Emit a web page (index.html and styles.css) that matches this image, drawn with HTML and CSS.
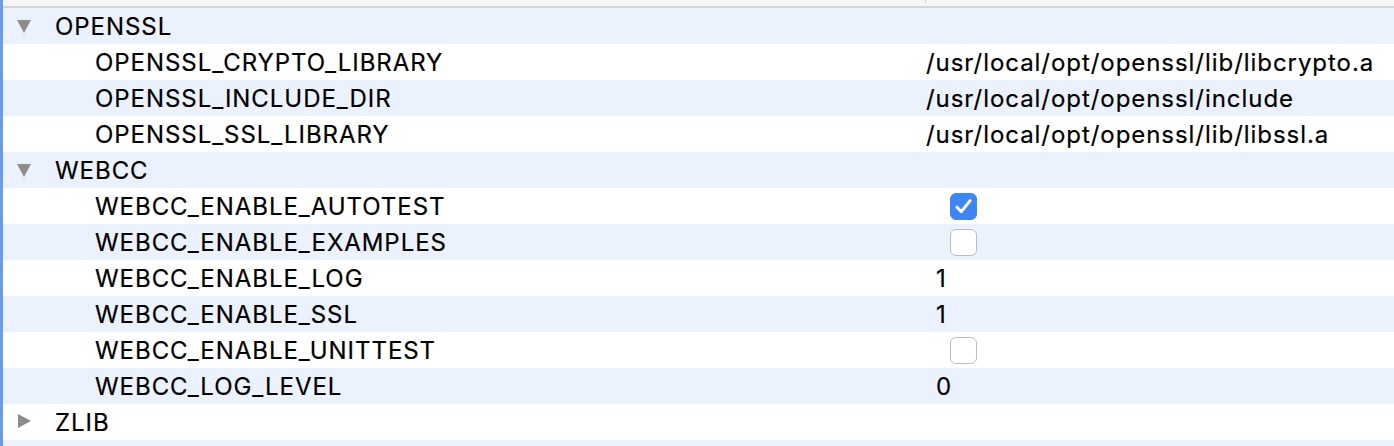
FILE: index.html
```html
<!DOCTYPE html>
<html>
<head>
	<meta charset="utf-8">
	<title>CMake cache</title>
	<link rel="stylesheet" href="styles.css">
</head>
<body>
	<div class="view">
		<div class="header"><span class="col-split"></span></div>

		<div class="tree">
			<div class="row group">
				<div class="name"><span class="arrow open"></span>OPENSSL</div>
				<div class="value"></div>
			</div>
			<div class="row">
				<div class="name">OPENSSL_CRYPTO_LIBRARY</div>
				<div class="value">/usr/local/opt/openssl/lib/libcrypto.a</div>
			</div>
			<div class="row">
				<div class="name">OPENSSL_INCLUDE_DIR</div>
				<div class="value">/usr/local/opt/openssl/include</div>
			</div>
			<div class="row">
				<div class="name">OPENSSL_SSL_LIBRARY</div>
				<div class="value">/usr/local/opt/openssl/lib/libssl.a</div>
			</div>

			<div class="row group">
				<div class="name"><span class="arrow open"></span>WEBCC</div>
				<div class="value"></div>
			</div>
			<div class="row">
				<div class="name">WEBCC_ENABLE_AUTOTEST</div>
				<div class="value"><span class="check on">
					<svg width="27" height="27" viewBox="0 0 27 27"><path d="M7 14.2 L11.3 18.6 L20.2 7.6" fill="none" stroke="#fff" stroke-width="3" stroke-linecap="round" stroke-linejoin="round"/></svg>
				</span></div>
			</div>
			<div class="row">
				<div class="name">WEBCC_ENABLE_EXAMPLES</div>
				<div class="value"><span class="check"></span></div>
			</div>
			<div class="row">
				<div class="name">WEBCC_ENABLE_LOG</div>
				<div class="value num">1</div>
			</div>
			<div class="row">
				<div class="name">WEBCC_ENABLE_SSL</div>
				<div class="value num">1</div>
			</div>
			<div class="row">
				<div class="name">WEBCC_ENABLE_UNITTEST</div>
				<div class="value"><span class="check"></span></div>
			</div>
			<div class="row">
				<div class="name">WEBCC_LOG_LEVEL</div>
				<div class="value num">0</div>
			</div>

			<div class="row group">
				<div class="name"><span class="arrow closed"></span>ZLIB</div>
				<div class="value"></div>
			</div>
			<div class="row">
				<div class="name"></div>
				<div class="value"></div>
			</div>
		</div>
	</div>
</body>
</html>
```

FILE: styles.css
```css
html, body {
	margin: 0;
	background: #fff;
}
.view {
	height: 446px;
	overflow: hidden;
	border-left: 3px solid #6d9de6;
	font-family: 'Inter', 'Liberation Sans', sans-serif;
	font-size: 24px;
	letter-spacing: 0.95px;
	color: #000;
	-webkit-text-stroke: 0.2px #000;
}
.header {
	height: 6px;
	background: #f5f5f5;
	border-bottom: 2px solid #d5d5d5;
	position: relative;
}
.col-split {
	position: absolute;
	left: 922px;
	top: 0;
	width: 1px;
	height: 3px;
	background: #d0d0d0;
}
.row {
	display: grid;
	grid-template-columns: 923px 1fr;
	height: 36px;
	align-items: center;
}
.row:nth-child(odd) {
	background: #ecf2fd;
}
.name {
	display: flex;
	align-items: center;
	padding-left: 92px;
	white-space: nowrap;
}
.group .name {
	padding-left: 14px;
}
.arrow {
	width: 38px;
	height: 14px;
	position: relative;
}
.arrow::before {
	content: "";
	position: absolute;
	left: 0;
	width: 0;
	height: 0;
}
.arrow.open::before {
	top: 1px;
	border-left: 7.5px solid transparent;
	border-right: 7.5px solid transparent;
	border-top: 13px solid #8c8c8c;
}
.arrow.closed::before {
	top: -1px;
	left: 1px;
	border-top: 7.5px solid transparent;
	border-bottom: 7.5px solid transparent;
	border-left: 13px solid #8c8c8c;
}
.value {
	white-space: nowrap;
	display: flex;
	align-items: center;
}
.value.num {
	padding-left: 10px;
}
.check {
	box-sizing: border-box;
	width: 27px;
	height: 27px;
	margin-left: 24px;
	border-radius: 6px;
	background: #fff;
	border: 1px solid #bdbdbd;
	display: flex;
	align-items: center;
	justify-content: center;
}
.check.on {
	background: #3d86f4;
	border-color: #3d86f4;
}
.check svg {
	flex: none;
	margin: -1px;
}
```
